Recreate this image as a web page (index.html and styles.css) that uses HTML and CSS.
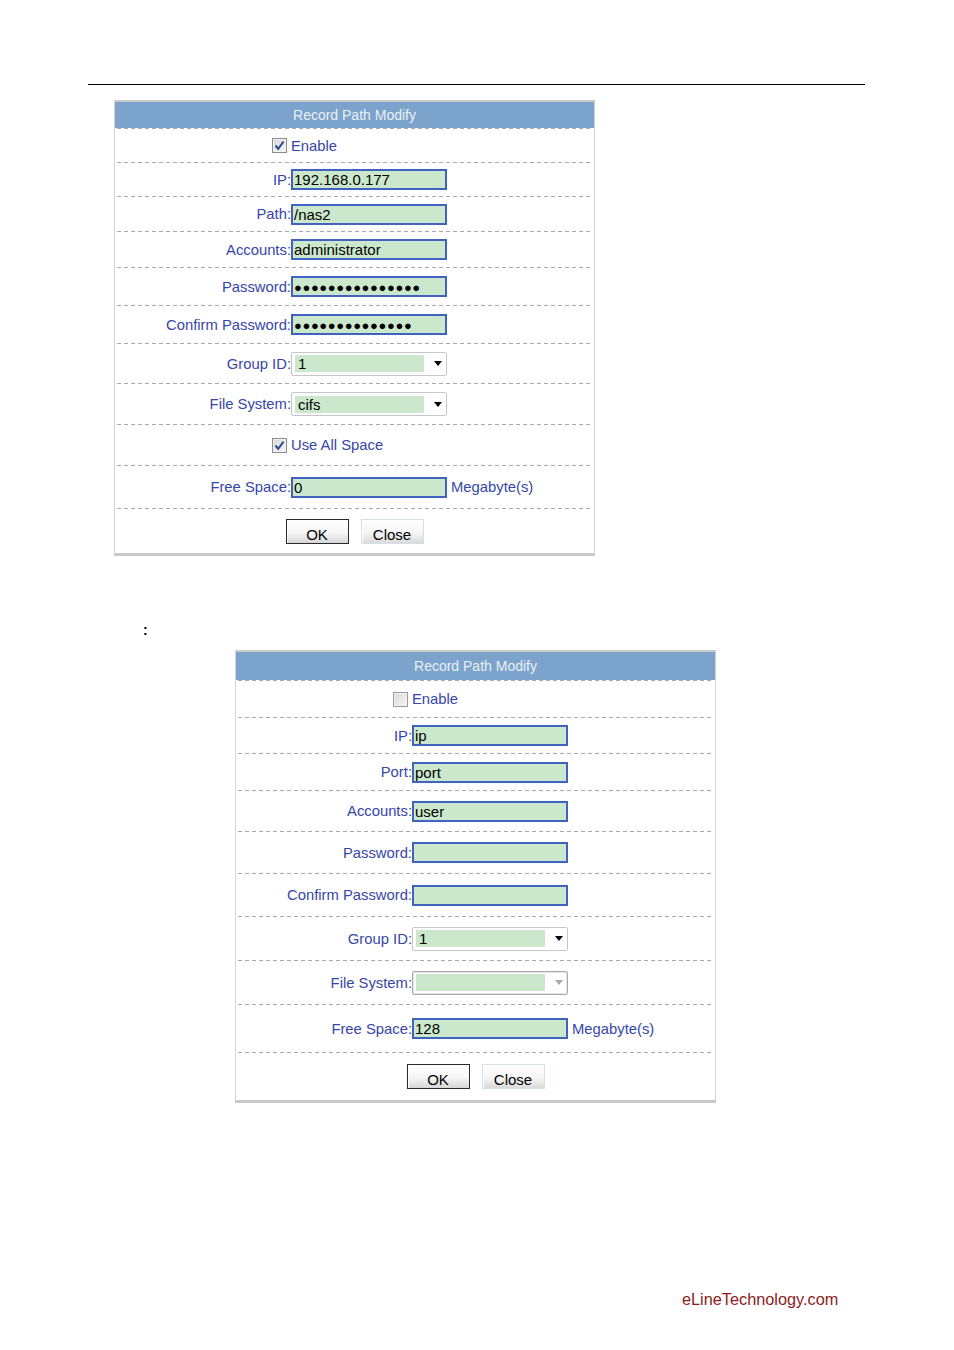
FILE: index.html
```html
<!DOCTYPE html>
<html>
<head>
<meta charset="utf-8">
<title>Record Path Modify</title>
<link rel="stylesheet" href="styles.css">
</head>
<body>
<div class="rule"></div>

<div class="panel p1">
  <div class="head">Record Path Modify</div>
  <div class="rows">
    <div class="row">
      <span class="lab cbcell"><span class="cb"><svg width="13" height="13" viewBox="0 0 13 13"><path d="M2.5 6.5 L5.2 9.8 L10.5 2.6" fill="none" stroke="#2d4b94" stroke-width="2"/></svg></span></span>
      <span class="val"><span class="txt">Enable</span></span>
    </div>
    <div class="row">
      <span class="lab">IP:</span>
      <span class="val"><span class="inp">192.168.0.177</span></span>
    </div>
    <div class="row">
      <span class="lab">Path:</span>
      <span class="val"><span class="inp">/nas2</span></span>
    </div>
    <div class="row">
      <span class="lab">Accounts:</span>
      <span class="val"><span class="inp">administrator</span></span>
    </div>
    <div class="row">
      <span class="lab">Password:</span>
      <span class="val"><span class="inp"><span class="dots">●●●●●●●●●●●●●●●</span></span></span>
    </div>
    <div class="row">
      <span class="lab">Confirm Password:</span>
      <span class="val"><span class="inp"><span class="dots">●●●●●●●●●●●●●●</span></span></span>
    </div>
    <div class="row">
      <span class="lab">Group ID:</span>
      <span class="val"><span class="sel"><span class="sv">1</span><svg class="arr" width="8" height="5" viewBox="0 0 8 5"><path d="M0 0H8L4 5Z" fill="#000"/></svg></span></span>
    </div>
    <div class="row">
      <span class="lab">File System:</span>
      <span class="val"><span class="sel"><span class="sv">cifs</span><svg class="arr" width="8" height="5" viewBox="0 0 8 5"><path d="M0 0H8L4 5Z" fill="#000"/></svg></span></span>
    </div>
    <div class="row">
      <span class="lab cbcell"><span class="cb"><svg width="13" height="13" viewBox="0 0 13 13"><path d="M2.5 6.5 L5.2 9.8 L10.5 2.6" fill="none" stroke="#2d4b94" stroke-width="2"/></svg></span></span>
      <span class="val"><span class="txt">Use All Space</span></span>
    </div>
    <div class="row">
      <span class="lab">Free Space:</span>
      <span class="val"><span class="inp">0</span><span class="txt">Megabyte(s)</span></span>
    </div>
    <div class="row btnrow">
      <span class="btn ok">OK</span>
      <span class="btn close">Close</span>
    </div>
  </div>
</div>

<div class="colon">:</div>

<div class="panel p2">
  <div class="head">Record Path Modify</div>
  <div class="rows">
    <div class="row">
      <span class="lab cbcell"><span class="cb off"></span></span>
      <span class="val"><span class="txt">Enable</span></span>
    </div>
    <div class="row">
      <span class="lab">IP:</span>
      <span class="val"><span class="inp">ip</span></span>
    </div>
    <div class="row">
      <span class="lab">Port:</span>
      <span class="val"><span class="inp">port</span></span>
    </div>
    <div class="row">
      <span class="lab">Accounts:</span>
      <span class="val"><span class="inp">user</span></span>
    </div>
    <div class="row">
      <span class="lab">Password:</span>
      <span class="val"><span class="inp"></span></span>
    </div>
    <div class="row">
      <span class="lab">Confirm Password:</span>
      <span class="val"><span class="inp"></span></span>
    </div>
    <div class="row">
      <span class="lab">Group ID:</span>
      <span class="val"><span class="sel"><span class="sv">1</span><svg class="arr" width="8" height="5" viewBox="0 0 8 5"><path d="M0 0H8L4 5Z" fill="#000"/></svg></span></span>
    </div>
    <div class="row">
      <span class="lab">File System:</span>
      <span class="val"><span class="sel dis"><span class="sv"></span><svg class="arr" width="8" height="5" viewBox="0 0 8 5"><path d="M0 0H8L4 5Z" fill="#a8a8a8"/></svg></span></span>
    </div>
    <div class="row">
      <span class="lab">Free Space:</span>
      <span class="val"><span class="inp">128</span><span class="txt">Megabyte(s)</span></span>
    </div>
    <div class="row btnrow">
      <span class="btn ok">OK</span>
      <span class="btn close">Close</span>
    </div>
  </div>
</div>

<div class="foot">eLineTechnology.com</div>
</body>
</html>
```

FILE: styles.css
```css
* { box-sizing: border-box; }

body {
  margin: 0;
  font-family: "Liberation Sans", Arial, sans-serif;
  background: #fff;
  color: #000;
}

.rule {
  margin: 84px 0 0 88px;
  width: 777px;
  border-top: 1px solid #000;
}

.panel {
  width: 481px;
  background: #fff;
  border: 1px solid #d3d3d3;
  border-top: 2px solid #cbcbcb;
  border-bottom: 3px solid #c8c8c8;
}

.p1 { margin: 15px 0 0 114px; }
.p2 { margin: 12px 0 0 235px; }

.head {
  background: #7ba3cb;
  color: #eaf0f7;
  font-size: 14px;
  text-align: center;
  height: 26px;
  line-height: 26px;
}
.p2 .head { height: 28px; line-height: 28px; }

.rows { padding: 0 2px; }

.row {
  display: grid;
  grid-template-columns: 174px auto;
  align-items: center;
  padding-top: 1px;
  background: repeating-linear-gradient(90deg, #a9a9a9 0 4px, transparent 4px 7px) 0 0 / 100% 1px no-repeat;
}

.p1 .row:nth-child(1) { height: 34px; }
.p1 .row:nth-child(2) { height: 34px; }
.p1 .row:nth-child(3) { height: 35px; }
.p1 .row:nth-child(4) { height: 36px; }
.p1 .row:nth-child(5) { height: 38px; }
.p1 .row:nth-child(6) { height: 38px; }
.p1 .row:nth-child(7) { height: 40px; }
.p1 .row:nth-child(8) { height: 41px; }
.p1 .row:nth-child(9) { height: 41px; }
.p1 .row:nth-child(10) { height: 43px; }
.p1 .row:nth-child(11) { height: 45px; }

.p2 .row:nth-child(1) { height: 37px; }
.p2 .row:nth-child(2) { height: 36px; }
.p2 .row:nth-child(3) { height: 37px; }
.p2 .row:nth-child(4) { height: 41px; }
.p2 .row:nth-child(5) { height: 42px; }
.p2 .row:nth-child(6) { height: 43px; }
.p2 .row:nth-child(7) { height: 44px; }
.p2 .row:nth-child(8) { height: 44px; }
.p2 .row:nth-child(9) { height: 48px; }
.p2 .row:nth-child(10) { height: 48px; }

.lab {
  text-align: right;
  font-size: 14.8px;
  color: #3646a9;
  white-space: nowrap;
}

.cbcell {
  display: flex;
  justify-content: flex-end;
  padding-right: 4px;
}

.cb {
  width: 15px;
  height: 15px;
  border: 1px solid #8c8c8c;
  background: linear-gradient(135deg, #d6d6d6, #f7f7f7);
  box-shadow: inset 0 0 0 1px #f2f2f2;
  display: flex;
  align-items: center;
  justify-content: center;
}
.cb.off {
  border-color: #9a9a9a;
  background: linear-gradient(135deg, #d9d9d9, #f4f4f4);
}

.val {
  display: flex;
  align-items: center;
  gap: 4px;
}

.txt {
  font-size: 14.8px;
  color: #3646a9;
  white-space: nowrap;
}

.inp {
  width: 156px;
  height: 21px;
  border: 2px solid #4262c2;
  background: #cce8cc;
  font-size: 15px;
  line-height: 17px;
  padding-left: 1px;
  color: #000;
  white-space: nowrap;
  overflow: hidden;
}

.dots {
  font-size: 13px;
  letter-spacing: 0.6px;
  line-height: 17px;
}

.sel {
  width: 156px;
  height: 24px;
  border: 1px solid #c6c6c6;
  border-radius: 2px;
  background: #fff;
  display: flex;
  align-items: center;
  padding-left: 3px;
}
.sel.dis {
  border-color: #a9a9a9;
  box-shadow: inset 0 0 0 1px #e4e4e4;
}

.sv {
  width: 129px;
  height: 17px;
  background: #cce8cc;
  font-size: 15px;
  line-height: 17px;
  padding-left: 3px;
  color: #000;
}

.arr {
  margin-left: auto;
  margin-right: 4px;
}

.btnrow {
  display: flex;
  justify-content: center;
  gap: 12px;
}

.btn {
  width: 63px;
  height: 25px;
  font-size: 15px;
  line-height: 17px;
  padding-top: 6px;
  text-align: center;
  color: #000;
}
.btn.ok {
  border: 1px solid #2a2a2a;
  background: linear-gradient(#ffffff 0%, #f6f6f6 55%, #d6d6d6 100%);
  box-shadow: inset 1px 1px 0 #fff;
}
.btn.close {
  border: 1px solid #d6dee6;
  background: linear-gradient(#ffffff 0%, #f6f6f6 55%, #dadada 100%);
  box-shadow: inset 1px 1px 0 #fff;
}

.colon {
  margin: 66px 0 0 143px;
  font-size: 14px;
  line-height: 16px;
  height: 16px;
  font-weight: bold;
}

.foot {
  margin: 187px 0 0 682px;
  font-size: 16.3px;
  line-height: 18px;
  color: #8c1c1c;
}
```
